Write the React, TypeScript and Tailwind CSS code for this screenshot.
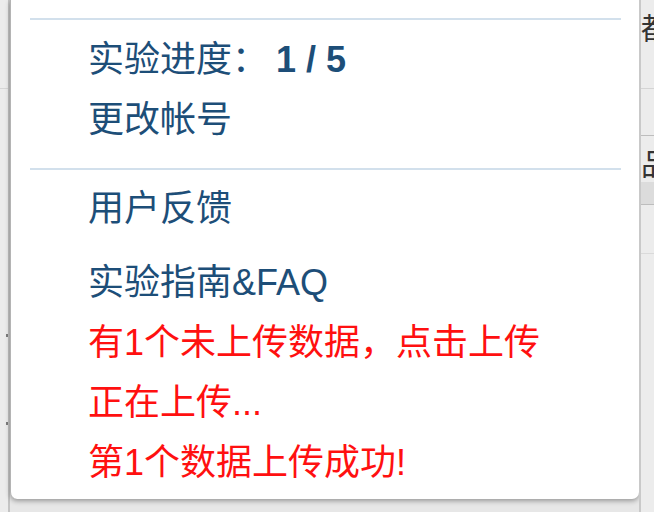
import React from "react";

const font = { fontFamily: '"Liberation Sans", "Noto Sans CJK SC", sans-serif' };

function Row({ children, red = false, className = "" }: { children: React.ReactNode; red?: boolean; className?: string }) {
  return (
    <div
      className={
        "h-[60px] leading-[60px] text-[36px] whitespace-nowrap " +
        (red ? "text-[#ff1010] " : "text-[#1d4e78] ") +
        className
      }
    >
      {children}
    </div>
  );
}

export default function App() {
  return (
    <div className="w-[654px] h-[512px] bg-[#e7e7e7] overflow-hidden flex" style={font}>
      {/* left strip of underlying page */}
      <div className="w-[10px] shrink-0 h-full flex">
        <div className="w-[8px] h-full bg-[#ececec] flex flex-col">
          <div className="h-[88px]" />
          <div className="h-px bg-[#d6d6d6]" />
          <div className="h-[245px]" />
          <div className="h-[3px] w-[3px] ml-[6px] bg-[#7d7d7d]" />
          <div className="h-[85px]" />
          <div className="h-[3px] w-[3px] ml-[6px] bg-[#7d7d7d]" />
        </div>
        <div className="w-[2px] h-full bg-[#c4c4c4]" />
      </div>

      {/* dropdown panel */}
      <div className="w-[629px] shrink-0 h-[499px] bg-white rounded-b-[7px] border-l border-[#b4b4b4] shadow-[0_2px_5px_rgba(0,0,0,0.35)] flex flex-col pt-[18px]">
        <div className="h-[2px] bg-[#d2e0ec] ml-[19px] mr-[18px]" />
        <div className="pl-[77px] mt-[10px]">
          <Row>
            实验进度：<span className="ml-[8px] font-bold">1 / 5</span>
          </Row>
          <Row>更改帐号</Row>
        </div>
        <div className="h-[2px] bg-[#d2e0ec] ml-[19px] mr-[18px] mt-[18px]" />
        <div className="pl-[77px] mt-[9px]">
          <Row>用户反馈</Row>
          <Row className="mt-[14px]">实验指南&amp;FAQ</Row>
          <Row red>有1个未上传数据，点击上传</Row>
          <Row red>正在上传...</Row>
          <Row red>第1个数据上传成功!</Row>
        </div>
      </div>

      {/* right strip of underlying page */}
      <div className="flex-1 min-w-0 h-full flex">
        <div className="w-[2px] shrink-0 h-full bg-[#c9c9c9]" />
        <div className="flex-1 min-w-0 h-full bg-[#ececec] flex flex-col overflow-hidden text-[#333] text-[30px] leading-none">
          <div className="h-[14px]" />
          <div className="h-[30px] overflow-hidden whitespace-nowrap">都</div>
          <div className="h-[44px]" />
          <div className="h-px bg-[#d4d4d4]" />
          <div className="h-[46px]" />
          <div className="h-px bg-[#bdbdbd]" />
          <div className="h-[14px]" />
          <div className="h-[32px] overflow-hidden whitespace-nowrap">品</div>
          <div className="h-[22px] bg-[#dcdcdc]" />
          <div className="h-px bg-[#bdbdbd]" />
          <div className="h-[48px]" />
          <div className="h-px bg-[#dadada]" />
        </div>
      </div>
    </div>
  );
}
